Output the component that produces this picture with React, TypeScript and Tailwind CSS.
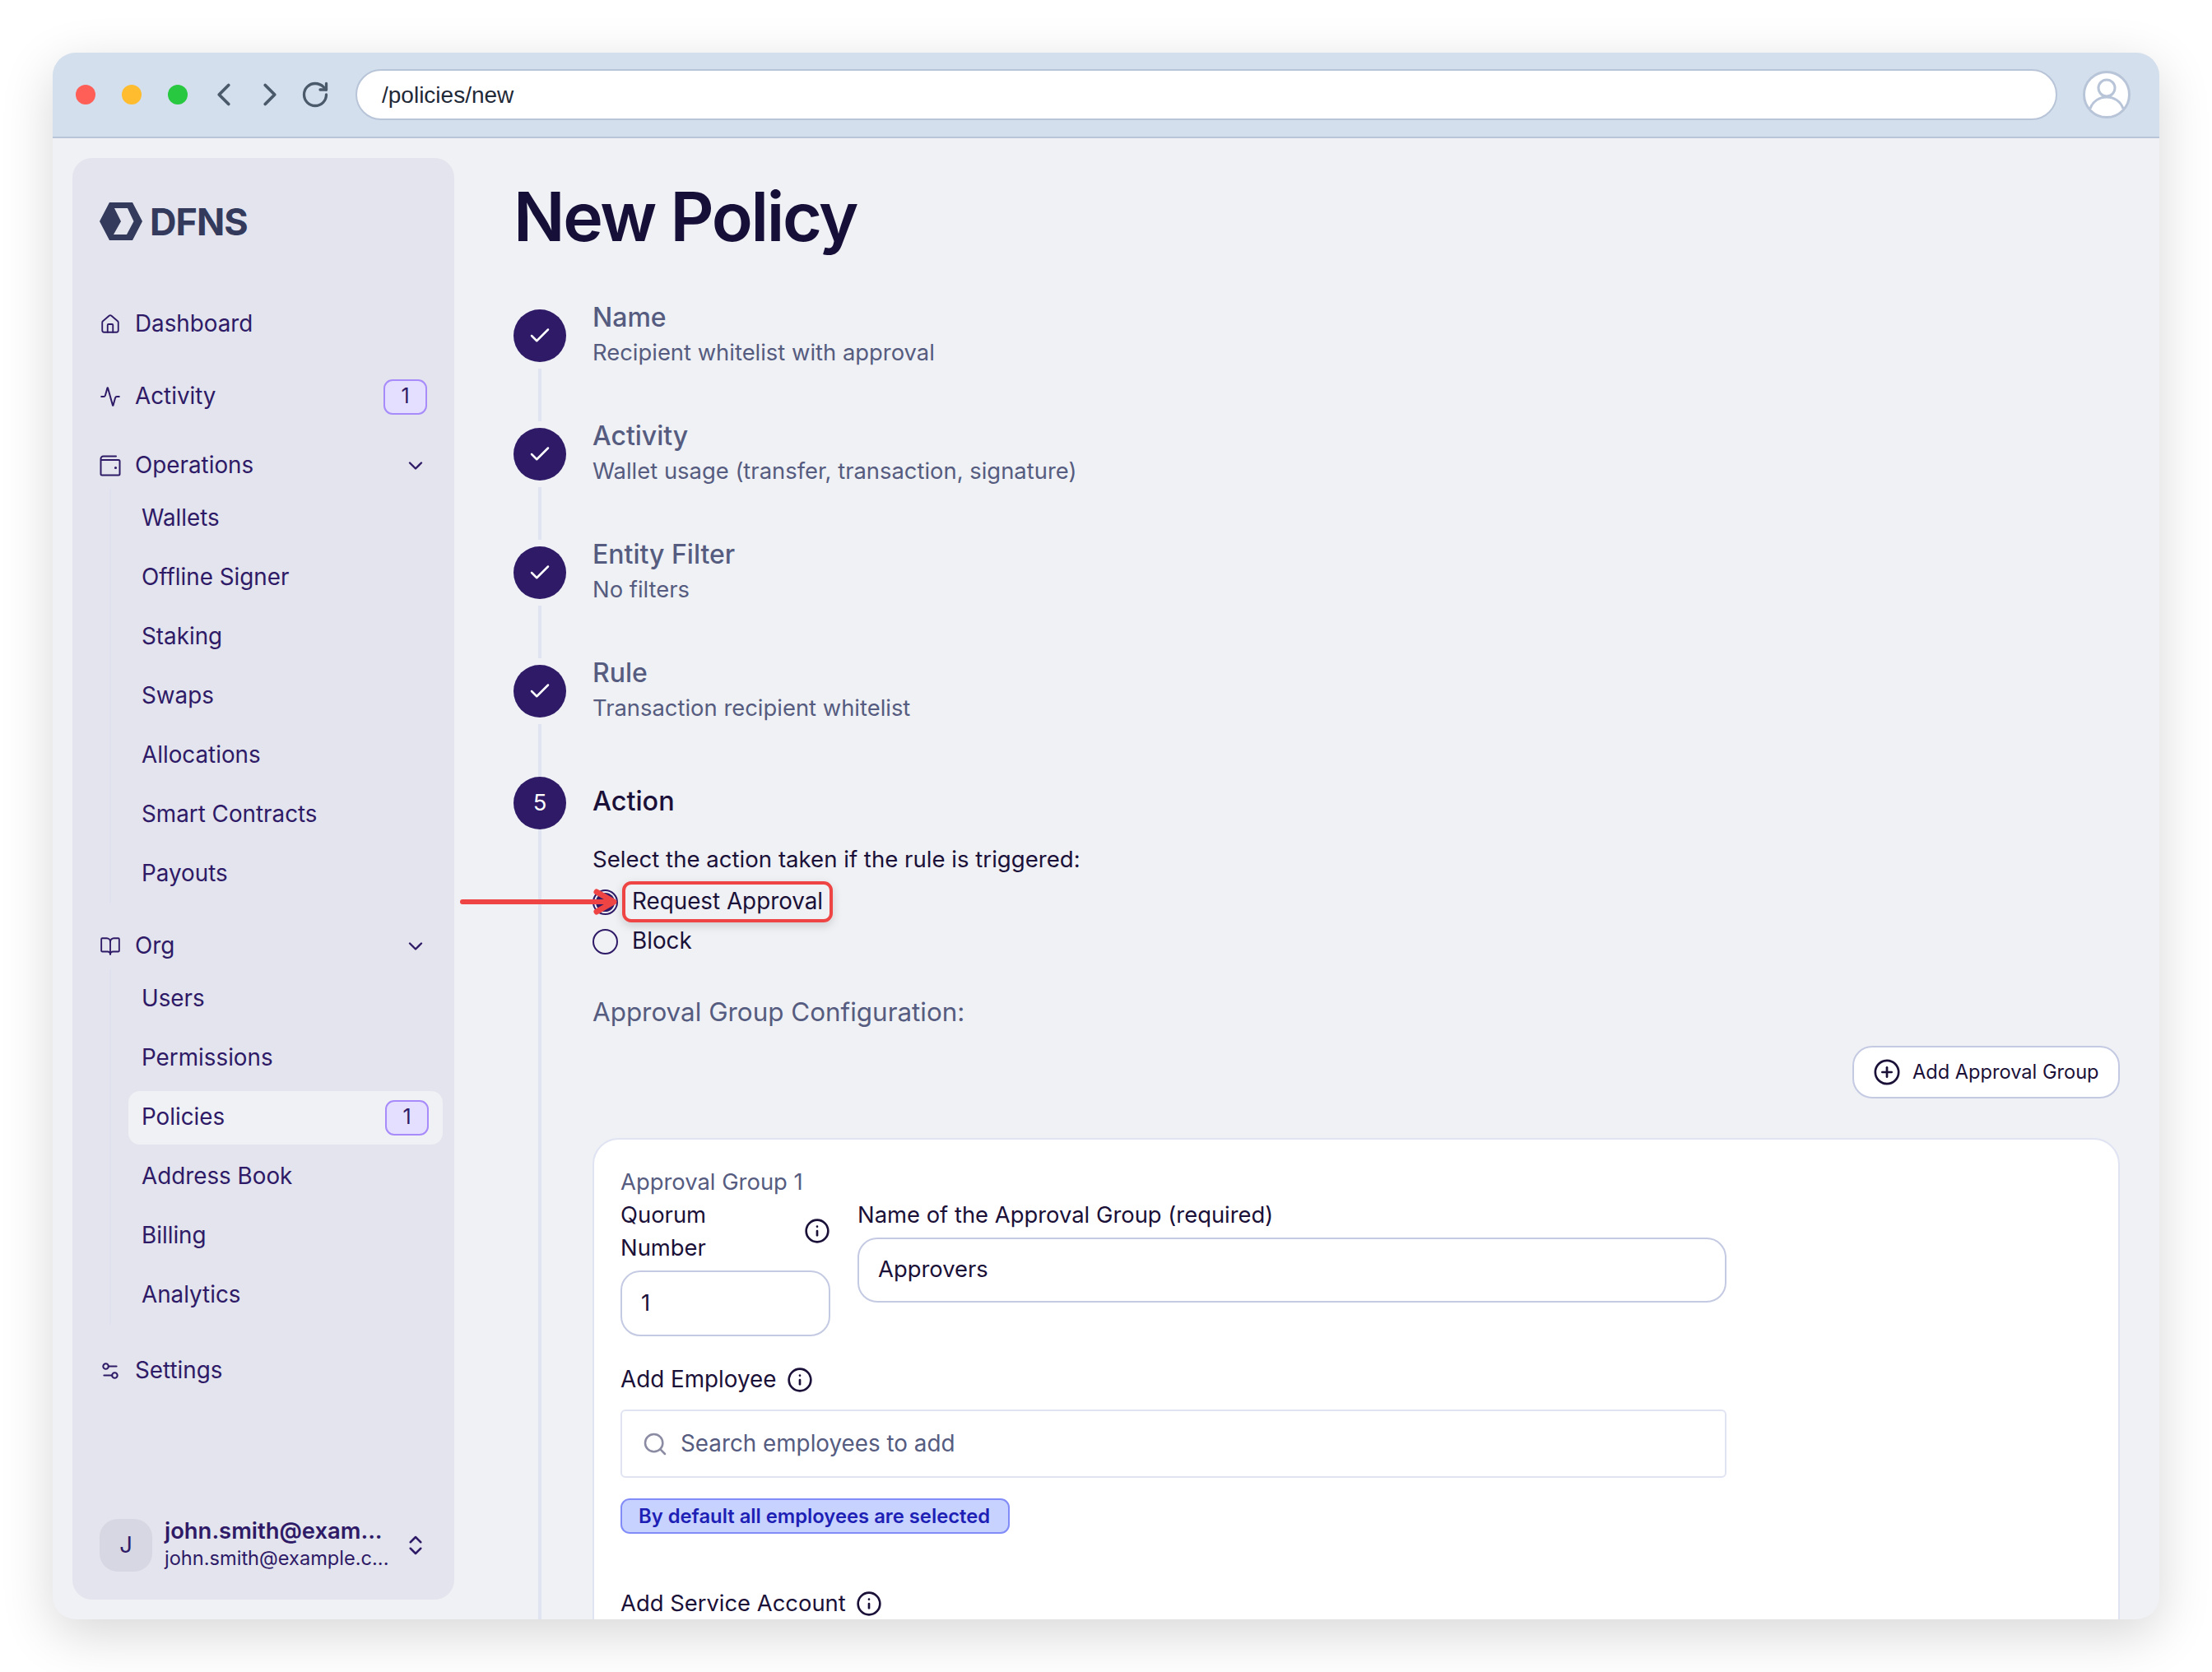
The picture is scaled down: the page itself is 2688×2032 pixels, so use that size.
import React from "react";
import {
  Activity,
  Check,
  ChevronDown,
  ChevronLeft,
  ChevronRight,
  ChevronsUpDown,
  CirclePlus,
  House,
  Info,
  RotateCw,
  Search,
  Settings2,
  BookOpen,
} from "lucide-react";

const operations = ["Wallets", "Offline Signer", "Staking", "Swaps", "Allocations", "Smart Contracts", "Payouts"];
const org = ["Users", "Permissions", "Policies", "Address Book", "Billing", "Analytics"];

const steps = [
  { title: "Name", sub: "Recipient whitelist with approval" },
  { title: "Activity", sub: "Wallet usage (transfer, transaction, signature)" },
  { title: "Entity Filter", sub: "No filters" },
  { title: "Rule", sub: "Transaction recipient whitelist" },
];

function Badge() {
  return (
    <span className="flex h-[43px] w-[53px] items-center justify-center rounded-[11px] border-2 border-[#a78bfa] bg-[#e5dfff] text-[25px] text-[#2e1a66]">
      1
    </span>
  );
}

function WalletIcon() {
  return (
    <svg width="26" height="26" viewBox="0 0 26 26" fill="none" stroke="#2e1a66" strokeWidth="2" strokeLinecap="round" strokeLinejoin="round">
      <path d="M20 1.500H4.500a3 3 0 0 0-3 3V23a1.500 1.500 0 0 0 1.500 1.500h20a1.500 1.500 0 0 0 1.500-1.500V7.500a1.500 1.500 0 0 0-1.500-1.500H3" />
      <circle cx="19.500" cy="15.500" r="0.600" fill="#2e1a66" />
    </svg>
  );
}

function NavRow({ icon, label, right }: { icon: React.ReactNode; label: string; right?: React.ReactNode }) {
  return (
    <div className="flex h-[56px] items-center text-[27.8px] text-[#2e1a66]">
      <span className="flex w-[26px] justify-center">{icon}</span>
      <span className="ml-[17px] flex-1">{label}</span>
      {right}
    </div>
  );
}

function SubList({ items }: { items: string[] }) {
  return (
    <div className="ml-[12px] border-l-2 border-[#dfe2ee] pl-[21px]">
      {items.map((item) => (
        <div key={item} className="flex h-[72px] w-[382px] items-center text-[27.8px] text-[#2e1a66]">
          <div
            className={`flex h-[65px] w-full items-center justify-between pl-[16px] pr-[17px] ${
              item === "Policies" ? "rounded-[14px] bg-[#f0f1f5]" : ""
            }`}
          >
            {item}
            {item === "Policies" && <Badge />}
          </div>
        </div>
      ))}
    </div>
  );
}

function Sidebar() {
  return (
    <aside className="flex h-[1752px] w-[464px] shrink-0 flex-col rounded-[24px] bg-[#e3e4ed] pl-[33px]">
      <div className="mt-[54px] flex h-[46px] items-center">
        <svg width="52" height="46" viewBox="0 0 52 46">
          <path
            fillRule="evenodd"
            fill="#343a5c"
            d="M0 23 12 0h28l12 23-12 23H12ZM18 7h16l7.500 16-8.500 16H17l9-16Z"
          />
        </svg>
        <span className="ml-[9px] text-[45px] font-bold leading-none tracking-[-1px] text-[#343a5c]">DFNS</span>
      </div>

      <div className="mt-[74px]">
        <NavRow icon={<House size={30} strokeWidth={1.7} />} label="Dashboard" />
      </div>
      <div className="mt-[32px] w-[398px]">
        <NavRow icon={<Activity size={30} strokeWidth={1.8} />} label="Activity" right={<Badge />} />
      </div>
      <div className="mt-[28px] w-[398px]">
        <NavRow icon={<WalletIcon />} label="Operations" right={<ChevronDown size={28} strokeWidth={2} />} />
      </div>
      <SubList items={operations} />
      <div className="mt-[24px] w-[398px]">
        <NavRow icon={<BookOpen size={32} strokeWidth={1.7} />} label="Org" right={<ChevronDown size={28} strokeWidth={2} />} />
      </div>
      <SubList items={org} />
      <div className="mt-[28px]">
        <NavRow icon={<Settings2 size={28} strokeWidth={1.9} />} label="Settings" />
      </div>

      <div className="mb-[34px] mt-auto flex h-[64px] items-center">
        <div className="flex h-[64px] w-[64px] items-center justify-center rounded-[22px] bg-[#d6d7e2] text-[27.4px] text-[#2e1a66]">
          J
        </div>
        <div className="-mt-[6px] ml-[15px] w-[280px]">
          <div className="text-[27.4px] font-semibold leading-[38px] text-[#2e1a66]">john.smith@exam...</div>
          <div className="text-[23.6px] leading-[30px] text-[#2e1a66]">john.smith@example.c...</div>
        </div>
        <ChevronsUpDown size={30} strokeWidth={2} className="ml-[10px] text-[#2e1a66]" />
      </div>
    </aside>
  );
}

function InfoIcon({ color = "#1a1038" }: { color?: string }) {
  return <Info size={32} strokeWidth={2} color={color} />;
}

function Stepper() {
  return (
    <div className="mt-[65px]">
      {steps.map((step, i) => (
        <div key={step.title} className={`flex ${i === 3 ? "h-[136px]" : "h-[144px]"}`}>
          <div className={`flex w-[64px] shrink-0 flex-col items-center ${i === 3 ? "" : "pb-[8px]"}`}>
            <div className="flex h-[64px] w-[64px] items-center justify-center rounded-full bg-[#2e1a66]">
              <Check size={30} strokeWidth={2} color="white" />
            </div>
            <div className="mt-[8px] w-[4px] flex-1 bg-[#e0e4f0]" />
          </div>
          <div className="-mt-[11px] ml-[32px]">
            <div className="text-[32px] font-medium leading-[42px] text-[#565c7f]">{step.title}</div>
            <div className="mt-[1px] text-[27.4px] leading-[40px] text-[#565c7f]">{step.sub}</div>
          </div>
        </div>
      ))}

      <div className="flex">
        <div className="flex w-[64px] shrink-0 flex-col items-center">
          <div className="flex h-[64px] w-[64px] items-center justify-center rounded-full bg-[#2e1a66] text-[27.4px] text-white">
            5
          </div>
          <div className="w-[4px] flex-1 bg-[#e0e4f0]" />
        </div>
        <div className="ml-[32px] flex-1">
          <div className="flex h-[64px] items-center pb-[3px] text-[32.4px] font-medium text-[#1a1038]">Action</div>
          <div className="mt-[16px] text-[27.6px] leading-[40px] text-[#1a1038]">Select the action taken if the rule is triggered:</div>

          <div className="relative mt-[8px] flex h-[48px] items-center text-[27.8px] text-[#1a1038]">
            <span className="flex h-[31px] w-[31px] items-center justify-center rounded-full border-2 border-[#2e1a66]">
              <span className="h-[23px] w-[23px] rounded-full bg-[#2e1a66]" />
            </span>
            <span className="ml-[5px] flex h-[50px] items-center rounded-[11px] border-4 border-[#ef4444] px-[8px] shadow-[0_4px_12px_rgba(0,0,0,0.15)]">
              Request Approval
            </span>
            <svg className="absolute left-[-161px] top-[6px]" width="194" height="36" viewBox="0 0 194 36" fill="none" stroke="#ef4444" strokeLinecap="round" strokeLinejoin="round">
              <path d="M3 18h182" strokeWidth="6" />
              <path d="M166 6l21 12-21 12" strokeWidth="7" />
            </svg>
          </div>
          <div className="flex h-[48px] items-center text-[27.8px] text-[#1a1038]">
            <span className="h-[31px] w-[31px] rounded-full border-2 border-[#2e1a66]" />
            <span className="ml-[17px]">Block</span>
          </div>

          <div className="mt-[40px] text-[31.4px] leading-[44px] text-[#565c7f]">Approval Group Configuration:</div>

          <div className="mt-[18.5px] flex justify-end">
            <button className="flex h-[64px] w-[325px] items-center gap-[14px] rounded-[24px] border-[2.5px] border-[#c5cae3] bg-white pl-[23px] text-[23.6px] text-[#1a1038]">
              <CirclePlus size={34} strokeWidth={1.9} />
              Add Approval Group
            </button>
          </div>

          <div className="mt-[48px] rounded-[32px] border-[2.5px] border-[#e0e3f2] bg-white pb-[200px] pl-[32px] pt-[31px]">
            <div className="text-[27.4px] leading-[40px] text-[#565c7f]">Approval Group 1</div>
            <div className="flex w-[1344px] gap-[33px] text-[27.4px] text-[#1a1038]">
              <div className="w-[255px] shrink-0">
                <div className="flex items-center justify-between">
                  <span className="w-[140px] leading-[40px]">Quorum Number</span>
                  <InfoIcon />
                </div>
                <div className="mt-[8px] flex h-[80.500px] items-center rounded-[24px] border-[2.5px] border-[#c5cae3] bg-white pl-[23px]">1</div>
              </div>
              <div className="flex-1">
                <div className="leading-[40px]">Name of the Approval Group (required)</div>
                <div className="mt-[8px] flex h-[79px] items-center rounded-[24px] border-[2.5px] border-[#c5cae3] bg-white pl-[23px]">Approvers</div>
              </div>
            </div>

            <div className="mt-[33px] flex h-[40px] items-center gap-[13px] text-[27.8px] text-[#1a1038]">
              Add Employee
              <InfoIcon />
            </div>
            <div className="mt-[16px] flex h-[83px] w-[1344px] items-center rounded-[6px] border-[2.5px] border-[#e0e3f2] bg-white pl-[24px] text-[27.8px] text-[#565c7f]">
              <Search size={32} strokeWidth={1.9} color="#8b8ca3" />
              <span className="ml-[15px]">Search employees to add</span>
            </div>
            <div className="mt-[25px] flex h-[43px] w-[473px] items-center rounded-[11px] border-[2.5px] border-[#818cf8] bg-[#c7d2fe] pl-[20px] text-[23.8px] font-semibold text-[#1e1fb5]">
              By default all employees are selected
            </div>

            <div className="mt-[65px] flex h-[40px] items-center gap-[12px] text-[27.4px] text-[#1a1038]">
              Add Service Account
              <InfoIcon />
            </div>
          </div>
        </div>
      </div>
    </div>
  );
}

export default function App() {
  return (
    <div className="h-[2032px] w-[2688px] overflow-hidden bg-white p-[64px] [font-family:Inter,sans-serif]">
      <div className="flex h-[1904px] w-[2560px] flex-col overflow-hidden rounded-[28px] bg-[#eff1f5] shadow-[0_18px_64px_rgba(0,0,0,0.16)]">
        <header className="flex h-[104px] shrink-0 items-center border-b-2 border-[#b8c4d8] bg-[#d3dfec] pl-[28px]">
          <span className="h-[24px] w-[24px] rounded-full bg-[#ff5f57]" />
          <span className="ml-[32px] h-[24px] w-[24px] rounded-full bg-[#febc2e]" />
          <span className="ml-[32px] h-[24px] w-[24px] rounded-full bg-[#28c840]" />
          <ChevronLeft size={46} strokeWidth={2} color="#4b5a6b" className="ml-[21px]" />
          <ChevronRight size={46} strokeWidth={2} color="#4b5a6b" className="ml-[10px]" />
          <RotateCw size={36} strokeWidth={2.2} color="#4b5a6b" className="ml-[14px]" />
          <div className="ml-[31px] flex h-[62px] w-[2068px] items-center rounded-full border-[2.5px] border-[#b8c4d8] bg-white pl-[30px] pt-[1px] text-[28px] text-[#1f2937] [font-family:'Liberation_Sans',sans-serif]">
            /policies/new
          </div>
          <svg className="ml-[31px]" width="58" height="58" viewBox="0 0 58 58" fill="none" stroke="#b8c4d8" strokeWidth="3">
            <circle cx="29" cy="29" r="27.500" fill="white" />
            <circle cx="29" cy="21" r="10" />
            <path d="M9 46c3-9 11-14 20-14s17 5 20 14" />
          </svg>
        </header>

        <div className="flex min-h-0 flex-1 overflow-hidden pl-[24px] pt-[24px]">
          <Sidebar />
          <main className="min-w-0 flex-1 pl-[72px] pr-[48px]">
            <h1 className="mt-[23px] h-[96px] text-[82.3px] font-semibold leading-[96px] tracking-[-2.3px] text-[#160f38]">New Policy</h1>
            <Stepper />
          </main>
        </div>
      </div>
    </div>
  );
}
